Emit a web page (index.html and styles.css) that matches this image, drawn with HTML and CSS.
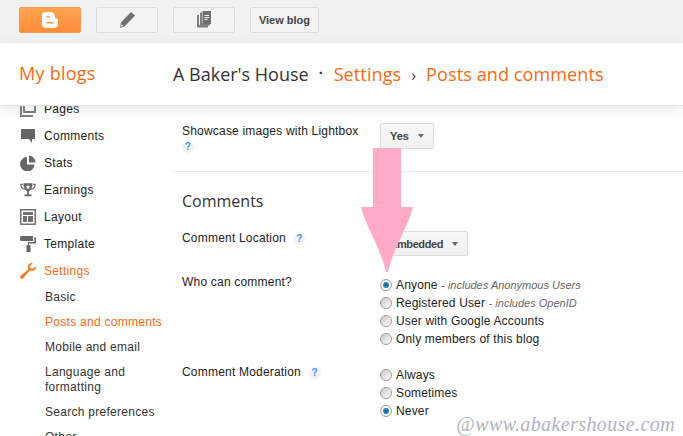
FILE: index.html
```html
<!DOCTYPE html>
<html lang="en">
  <head>
    <meta charset="UTF-8" />
    <title>Posts and comments</title>
    <link rel="stylesheet" href="styles.css">
  </head>
  <body>
    <div class="top">
      <div class="tool tool-orange">
        <svg width="18" height="18" viewBox="0 0 18 18"><path fill="#fff" fill-rule="evenodd" d="M4 1h5c3 0 5 2 5 4.500v1.500c2 0 3 1 3 2.500V13c0 2.500-2 4-4 4H5c-2.500 0-4-2-4-4V4c0-2 1.500-3 3-3zM5.500 5v1.500H9V5zM5.500 11v1.500h7V11z"/></svg>
      </div>
      <div class="tool">
        <svg width="18" height="18" viewBox="0 0 18 18"><path fill="#707070" d="M13 1l4 3.500L7 15l-5 2 1-5.500z"/><path fill="#eee" d="M3.500 13l1.500 2-2 .8z"/></svg>
      </div>
      <div class="tool">
        <svg width="18" height="18" viewBox="0 0 16 18"><path fill="#808080" d="M1 4h2v10h9v2.500H1z"/><path fill="#808080" d="M4 1.500h2v11h8v2H4z"/><path fill="#707070" fill-rule="evenodd" d="M6.500 0H15v13H6.500zM8.500 4v1h4.500V4zM8.500 6v1h4.500V6zM8.500 8v1h3V8z"/></svg>
      </div>
      <div class="tool tool-text">View blog</div>
    </div>

    <div class="header">
      <div class="myblogs">My blogs</div>
      <div class="crumbs">
        <span class="blogname">A Baker's House</span>
        <span class="dot">·</span>
        <span class="crumb">Settings</span>
        <span class="sep">›</span>
        <span class="crumb">Posts and comments</span>
      </div>
    </div>

    <div class="principal">
      <div class="side">
        <div class="item">
          <svg width="16" height="16" viewBox="0 0 16 16"><path fill="none" stroke="#808080" stroke-width="2" d="M1 1v14h12M4 1v10h11V1"/></svg>
          Pages
        </div>
        <div class="item">
          <svg width="16" height="16" viewBox="0 0 16 16"><path fill="#666" d="M2 1h12c.7 0 1 .4 1 1v8c0 .7-.4 1-1 1h-2v4l-3-4H2c-.7 0-1-.4-1-1V2c0-.6.4-1 1-1z"/></svg>
          Comments
        </div>
        <div class="item">
          <svg width="16" height="16" viewBox="0 0 16 16"><path fill="#666" d="M7 2v7.500h7.500A7.200 7.200 0 1 1 7 2z"/><path fill="#666" d="M9 0.500a7 7 0 0 1 6.500 7H9z"/></svg>
          Stats
        </div>
        <div class="item">
          <svg width="18" height="16" viewBox="0 0 18 16"><path fill="none" stroke="#666" stroke-width="1.300" d="M4 1.500H1c0 3 1.500 5 4.500 5.500M14 1.500h3c0 3-1.500 5-4.500 5.500"/><path fill="#666" d="M4 .5h10c0 5-1.500 8-4 9v3.500h3v2H5v-2h3V9.500c-2.500-1-4-4-4-9z"/><path fill="#fff" d="M9 2l.8 1.700 1.700.2-1.300 1.200.4 1.800L9 6l-1.600.9.400-1.800L6.500 3.900l1.700-.2z"/></svg>
          Earnings
        </div>
        <div class="item">
          <svg width="16" height="16" viewBox="0 0 16 16"><path fill="#707070" fill-rule="evenodd" d="M0 0h16v16H0zM1.500 1.500v13h13v-13zM3 3h10v3H3zM3 7h4v6H3zM8 7h5v6H8z"/></svg>
          Layout
        </div>
        <div class="item">
          <svg width="16" height="16" viewBox="0 0 16 16"><path fill="#666" d="M0 1.500C0 .7.500 0 1.500 0H13v5H1.500C.5 5 0 4.500 0 3.500z"/><path fill="#666" d="M14 1.500h2V7.500H9V9H10.500v7H6.500V9H8V6h6.500z"/></svg>
          Template
        </div>
        <div class="item item-active">
          <svg width="16" height="16" viewBox="0 0 16 16"><path fill="#f57d20" d="M15.500 3.200l-2.700 2.600-2.300-.5-.5-2.300L12.700.3C10.500-.5 7.800 1 8 4.500c0 .7.200 1.200.4 1.700L.8 12.800c-1 1-.9 1.800-.1 2.500.7.700 1.500.8 2.400-.1l6.700-7.600c3.500 1 6.800-1 5.700-4.400z"/></svg>
          Settings
        </div>
        <div class="sub">
          <div>Basic</div>
          <div class="sub-active">Posts and comments</div>
          <div>Mobile and email</div>
          <div>Language and formatting</div>
          <div>Search preferences</div>
          <div>Other</div>
        </div>
      </div>

      <div class="content">
        <div class="row row-light">
          <div class="lbl">
            Showcase images with Lightbox
            <div><span class="help">?</span></div>
          </div>
          <div class="btn">Yes<span class="caret"></span></div>
        </div>

        <h2>Comments</h2>

        <div class="row row-location">
          <div class="lbl">Comment Location <span class="help help-inline">?</span></div>
          <div class="btn btn-wide">Embedded<span class="caret"></span></div>
        </div>

        <div class="row row-who">
          <div class="lbl lbl-up">Who can comment?</div>
          <div class="radios">
            <label><input type="radio" name="who" checked>Anyone <em>- includes Anonymous Users</em></label>
            <label><input type="radio" name="who">Registered User <em>- includes OpenID</em></label>
            <label><input type="radio" name="who">User with Google Accounts</label>
            <label><input type="radio" name="who">Only members of this blog</label>
          </div>
        </div>

        <div class="row row-mod">
          <div class="lbl lbl-up">Comment Moderation <span class="help help-inline">?</span></div>
          <div class="radios">
            <label><input type="radio" name="mod">Always</label>
            <label><input type="radio" name="mod">Sometimes</label>
            <label><input type="radio" name="mod" checked>Never</label>
          </div>
        </div>
      </div>
    </div>

    <svg class="arrow" width="52" height="124" viewBox="0 0 52 124"><path fill="#ffaac8" d="M12 0h28v59h12c-5 20-20 42-25 65h-2C20 101 5 79 0 59h12z"/></svg>
    <div class="mark">@www.abakershouse.com</div>
  </body>
</html>
```

FILE: styles.css
```css
html, body {
  height: 100%;
}
body {
  margin: 0;
  height: 436px;
  overflow: hidden;
  position: relative;
  background-color: #fff;
  color: #222;
  font-family: "Liberation Sans", Arial, sans-serif;
  font-size: 12px;
}

/* barra de cima */
.top {
  display: flex;
  gap: 15px;
  height: 43px;
  box-sizing: border-box;
  padding: 7px 0 0 19px;
  background-color: #f1f1f1;
}
.tool {
  display: flex;
  align-items: center;
  justify-content: center;
  width: 62px;
  height: 26px;
  box-sizing: border-box;
  border: 1px solid #dcdcdc;
  border-radius: 2px;
  background-color: #f3f3f3;
}
.tool-orange {
  background: linear-gradient(#ffa552, #ff8c38);
  border-color: #f59a4e;
}
.tool-text {
  width: 69px;
  font-size: 11px;
  font-weight: bold;
  color: #444;
}

/* titulo */
.header {
  position: relative;
  z-index: 2;
  display: flex;
  align-items: center;
  height: 62px;
  background-color: #fff;
  font-family: "Open Sans", sans-serif;
  box-shadow: 0 1px 1px #e4e4e4, 0 4px 12px rgba(0, 0, 0, 0.1);
}
.myblogs {
  width: 154px;
  padding-left: 19px;
  margin-top: -2px;
  font-size: 18px;
  letter-spacing: 0.25px;
  color: #f76a12;
}
.crumbs {
  display: flex;
  align-items: baseline;
  font-size: 18px;
  color: #333;
}
.crumb {
  letter-spacing: 0.11px;
  color: #f76a12;
}
.dot {
  position: relative;
  top: -3px;
  margin: 0 11px 0 10px;
  font-size: 14px;
  font-weight: bold;
}
.sep {
  margin: 0 10px;
  font-size: 16px;
}

.principal {
  display: grid;
  grid-template-columns: 173px 1fr;
}

/* menu lateral */
.side {
  height: 331px;
  overflow: hidden;
}
.item {
  display: flex;
  align-items: center;
  gap: 8px;
  height: 27px;
  margin-top: -10px;
  margin-bottom: 10px;
  padding-left: 20px;
  letter-spacing: 0.3px;
  color: #222;
}
.item svg {
  flex: none;
  width: 16px;
}
.item-active {
  color: #f76a12;
}
.sub {
  margin-top: -9px;
  padding: 0 8px 0 45px;
  line-height: 15px;
  letter-spacing: 0.28px;
  color: #333;
}
.sub div {
  padding: 5px 0;
}
.sub .sub-active {
  color: #f76a12;
}

/* conteudo */
.content {
  height: 331px;
  overflow: hidden;
}
.row {
  display: grid;
  grid-template-columns: 198px 1fr;
  padding-left: 9px;
}
.lbl {
  line-height: 15px;
  letter-spacing: 0.2px;
}
.lbl-up {
  margin-top: -1px;
}
.row-light {
  height: 67px;
  padding-top: 18px;
  box-sizing: border-box;
  border-bottom: 1px solid #ebebeb;
}
.row-light .lbl {
  margin-top: 1px;
}
.row-location {
  height: 51px;
  padding-top: 6px;
  box-sizing: border-box;
}
.row-who {
  height: 90px;
}
h2 {
  margin: 17px 0 12px 9px;
  font-family: "Open Sans", sans-serif;
  font-size: 16px;
  font-weight: normal;
  line-height: 24px;
  color: #333;
}
.help {
  display: inline-block;
  width: 12px;
  height: 12px;
  margin-top: 1px;
  border-radius: 50%;
  background-color: #f1f3f6;
  color: #4d90fe;
  font-size: 10px;
  font-weight: bold;
  line-height: 12px;
  text-align: center;
}
.help-inline {
  margin: 0 0 0 4px;
}
.btn {
  display: inline-flex;
  align-items: center;
  justify-self: start;
  height: 26px;
  box-sizing: border-box;
  padding: 0 9px;
  border: 1px solid #dcdcdc;
  border-radius: 2px;
  background: linear-gradient(#f8f8f8, #f1f1f1);
  font-size: 11px;
  font-weight: bold;
  letter-spacing: -0.1px;
  color: #444;
}
.btn-wide {
  height: 25px;
  letter-spacing: -0.4px;
}
.caret {
  margin-left: 9px;
  border-top: 4px solid #666;
  border-left: 3.5px solid transparent;
  border-right: 3.5px solid transparent;
}
.radios {
  display: flex;
  flex-direction: column;
}
.radios label {
  display: flex;
  align-items: center;
  height: 18px;
  white-space: pre;
  letter-spacing: 0.16px;
  color: #222;
}
.radios em {
  font-size: 11px;
  letter-spacing: 0;
  color: #666;
}
input[type="radio"] {
  appearance: none;
  flex: none;
  width: 12px;
  height: 12px;
  margin: 0 4px 0 0;
  border: 1px solid #a0a0a0;
  border-radius: 50%;
  background: linear-gradient(135deg, #c6c6c6, #fff);
}
input[type="radio"]:checked {
  background: radial-gradient(circle, #0a5f92 0, #1c87c2 2.5px, #fff 3.5px, #ddd 100%);
}

/* por cima da pagina */
.arrow {
  position: absolute;
  left: 361px;
  top: 148px;
  z-index: 3;
}
.mark {
  position: absolute;
  right: 8px;
  bottom: 1px;
  z-index: 3;
  font-family: "Liberation Serif", serif;
  font-size: 20px;
  font-style: italic;
  letter-spacing: 0.4px;
  line-height: 22px;
  color: #b0b4bf;
}
```
